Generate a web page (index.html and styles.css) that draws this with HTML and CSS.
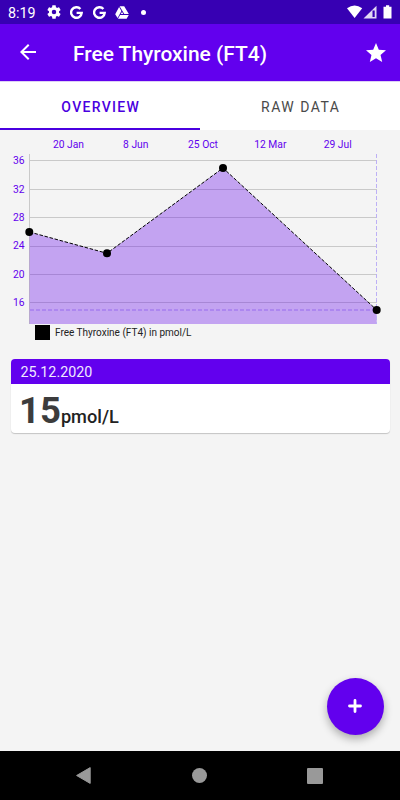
FILE: index.html
```html
<!DOCTYPE html>
<html lang="en">
<head>
<meta charset="utf-8">
<meta name="viewport" content="width=device-width, initial-scale=1">
<title>Free Thyroxine (FT4)</title>
<link rel="stylesheet" href="styles.css">
</head>
<body>
    <div class="statusBar">
        <span class="clock">8:19</span>
        <svg class="gear" width="14" height="14" viewBox="2 2 20 20">
            <path fill="#fff" d="M19.14 12.94c.04-.3.06-.61.06-.94 0-.32-.02-.64-.07-.94l2.03-1.58c.18-.14.23-.41.12-.61l-1.92-3.32c-.12-.22-.37-.29-.59-.22l-2.39.96c-.5-.38-1.03-.7-1.62-.94l-.36-2.54c-.04-.24-.24-.41-.48-.41h-3.84c-.24 0-.43.17-.47.41l-.36 2.54c-.59.24-1.13.57-1.62.94l-2.39-.96c-.22-.08-.47 0-.59.22L2.74 8.87c-.12.21-.08.47.12.61l2.03 1.58c-.05.3-.09.63-.09.94s.02.64.07.94l-2.03 1.58c-.18.14-.23.41-.12.61l1.92 3.32c.12.22.37.29.59.22l2.39-.96c.5.38 1.03.7 1.62.94l.36 2.54c.05.24.24.41.48.41h3.84c.24 0 .44-.17.47-.41l.36-2.54c.59-.24 1.13-.56 1.62-.94l2.39.96c.22.08.47 0 .59-.22l1.92-3.32c.12-.22.07-.47-.12-.61l-2.01-1.58zM12 15.2a3.2 3.2 0 1 1 0-6.4 3.2 3.2 0 0 1 0 6.4z"/>
        </svg>
        <svg class="google" width="13" height="13" viewBox="0 0 13 13">
            <path fill="none" stroke="#fff" stroke-width="2.4" d="M10.4 3A5.300 5.300 0 1 0 11.700 6.900H6.600"/>
        </svg>
        <svg class="google" width="13" height="13" viewBox="0 0 13 13">
            <path fill="none" stroke="#fff" stroke-width="2.4" d="M10.4 3A5.300 5.300 0 1 0 11.700 6.900H6.600"/>
        </svg>
        <svg class="drive" width="14" height="13" viewBox="0 0 14 13">
            <path fill="#fff" d="M4.600.3h4.600l4.600 7.800h-4.500zM4.100 1.100 6.400 5.100 2.600 12.100.2 8.200zM5.100 8.900h8.700l-2.200 3.800H3zM7 5.900l1.300 2.200H5.700z"/>
        </svg>
        <span class="dot"></span>
        <svg class="signals" width="46" height="14" viewBox="0 0 46 14">
            <path fill="#fff" d="M0 3.200Q7.600-2.200 15.200 3.200L7.600 13z"/>
            <path fill="#fff" fill-opacity=".85" d="M29.500.7V13.500H16.500z"/>
            <path fill="#3700b3" d="M25.500 5.500h2.200v6.500h-2.200z"/>
            <path fill="#fff" d="M39 .3h3.200v1.500h2.300V13.500h-8V1.800H39z"/>
        </svg>
    </div>

    <div class="appBar">
        <svg class="back" width="16" height="16" viewBox="4 4 16 16">
            <path fill="#fff" d="M20 11H7.830l5.590-5.590L12 4l-8 8 8 8 1.410-1.410L7.830 13H20v-2z"/>
        </svg>
        <h1>Free Thyroxine (FT4)</h1>
        <svg width="20" height="19" viewBox="2 2 20 19">
            <path fill="#fff" d="M12 17.270 18.180 21l-1.640-7.030L22 9.240l-7.190-.61L12 2 9.190 8.630 2 9.240l5.460 4.730L5.820 21z"/>
        </svg>
    </div>

    <div class="tabs">
        <div class="tab active">OVERVIEW</div>
        <div class="tab">RAW DATA</div>
    </div>

    <div class="content">
        <svg class="chart" width="400" height="194" viewBox="0 131 400 194">
            <!-- grid -->
            <path class="grid" d="M29 160.500H377M29 189.500H377M29 217.500H377M29 246.500H377M29 274.500H377M29 302.500H377"/>
            <path class="grid" d="M29.500 154V324"/>
            <!-- values -->
            <path class="area" d="M29.500 232 107 253.300 223 168 376.700 310V324H29.500z"/>
            <path class="limit" d="M30 310H376"/>
            <path class="marker" d="M376.500 154V324"/>
            <path class="line" d="M29.500 232 107 253.300 223 168 376.700 310"/>
            <circle cx="29.300" cy="232" r="4"/>
            <circle cx="107" cy="253.300" r="4"/>
            <circle cx="223" cy="168" r="4"/>
            <circle cx="376.700" cy="310" r="4"/>
            <!-- axis labels -->
            <g class="xLabels">
                <text x="68.500" y="147.500">20 Jan</text>
                <text x="135.800" y="147.500">8 Jun</text>
                <text x="203" y="147.500">25 Oct</text>
                <text x="270.300" y="147.500">12 Mar</text>
                <text x="337.700" y="147.500">29 Jul</text>
            </g>
            <g class="yLabels">
                <text x="24.500" y="164">36</text>
                <text x="24.500" y="192.500">32</text>
                <text x="24.500" y="221">28</text>
                <text x="24.500" y="249.300">24</text>
                <text x="24.500" y="277.700">20</text>
                <text x="24.500" y="306.200">16</text>
            </g>
        </svg>
        <div class="legend"><span class="swatch"></span>Free Thyroxine (FT4) in pmol/L</div>

        <div class="card">
            <div class="cardDate">25.12.2020</div>
            <div class="cardValue"><span class="number">15</span><span class="unit">pmol/L</span></div>
        </div>

        <div class="addButton">
            <svg width="14" height="14" viewBox="0 0 14 14">
                <path fill="none" stroke="#fff" stroke-width="2.800" stroke-linecap="round" d="M7 1.500V12.500M1.500 7H12.500"/>
            </svg>
        </div>
    </div>

    <div class="navBar">
        <svg width="15" height="17" viewBox="0 0 15 17"><path fill="#999" d="M14.200.6V16.400L.6 8.500z" stroke="#999" stroke-linejoin="round"/></svg>
        <span class="home"></span>
        <span class="recent"></span>
    </div>
</body>
</html>
```
FILE: styles.css
```css
* {box-sizing: border-box}
body {margin: 0;
      height: 800px;
      display: flex;
      flex-direction: column;
      overflow: hidden;
      background-color: #f4f4f4;
      font-family: Roboto, "Liberation Sans", sans-serif}
svg {display: block; flex: none}

.statusBar {height: 24px;
            display: flex;
            align-items: center;
            padding: 0 7px 0 8px;
            color: white;
            background-color: #3700b3}
.clock {width: 39px; font-size: 14.3px; padding-top: 2px}
.google {margin-left: 9.500px}
.gear + .google {margin-left: 9px}
.drive {margin-left: 9px}
.dot {width: 5px;
      height: 5px;
      margin-left: 12.500px;
      border-radius: 50%;
      background-color: white}
.signals {margin-left: auto}

.appBar {height: 57px;
         display: flex;
         align-items: center;
         padding: 0 14.500px 0 20px;
         color: white;
         background-color: #6200ee}
.back {margin-bottom: 1px}
.appBar h1 {flex: 1;
            margin: 2px 0 0 37px;
            font-size: 20.950px;
            font-weight: 500}

.tabs {height: 49px;
       display: flex;
       background-color: white;
       box-shadow: inset 0 1px 0 #ddd0f5}
.tab {flex: 1;
      padding: 17px 0 0 1.500px;
      text-align: center;
      font-size: 14px;
      line-height: 18px;
      letter-spacing: 1.500px;
      color: #4a4a4a}
.active {font-weight: 500;
         letter-spacing: 1.300px;
         color: #4a00e0;
         border-bottom: 2px solid #4a00e0}

.content {flex: 1; position: relative}
.chart {margin-top: 1px}
.chart text {font-size: 10.300px; fill: #6200ee}
.xLabels {text-anchor: middle}
.yLabels {text-anchor: end}
.grid {stroke: #c9c9c9; fill: none}
.area {fill: #6200ee; fill-opacity: .33}
.limit {stroke: #a67fee; stroke-width: 1.500; stroke-dasharray: 4 2}
.marker {stroke: #bdb0f5; stroke-dasharray: 4 2}
.line {stroke: black; fill: none; stroke-dasharray: 3.500 1.700}
.legend {height: 15px;
         display: flex;
         align-items: center;
         padding-left: 35px;
         font-size: 10px;
         color: #222}
.swatch {width: 15px;
         height: 15px;
         margin-right: 5px;
         background-color: black}

.card {margin: 19px 10.500px 0;
       height: 74px;
       overflow: hidden;
       border-radius: 4px;
       background-color: white;
       box-shadow: 0 1px 1px rgba(0, 0, 0, .2)}
.cardDate {height: 25px;
           padding-left: 10px;
           font-size: 14.300px;
           line-height: 27px;
           color: #f0e8ff;
           background-color: #6200ee}
.cardValue {padding-left: 8.500px; line-height: 54px}
.number {font-size: 36.500px; font-weight: bold; color: #3c3c3c}
.unit {font-size: 18.200px; font-weight: 500; color: #222}

.addButton {position: absolute;
            right: 16.500px;
            bottom: 16.500px;
            width: 57px;
            height: 57px;
            display: flex;
            align-items: center;
            justify-content: center;
            border-radius: 50%;
            background-color: #6200ee;
            box-shadow: 0 4px 8px rgba(0, 0, 0, .3)}

.navBar {height: 49px;
         display: flex;
         align-items: center;
         justify-content: space-between;
         padding: 0 77px 0 76px;
         background-color: black}
.home {width: 15px;
       height: 15px;
       border-radius: 50%;
       background-color: #999}
.recent {width: 16px;
         height: 16px;
         border-radius: 1px;
         background-color: #999}
```
